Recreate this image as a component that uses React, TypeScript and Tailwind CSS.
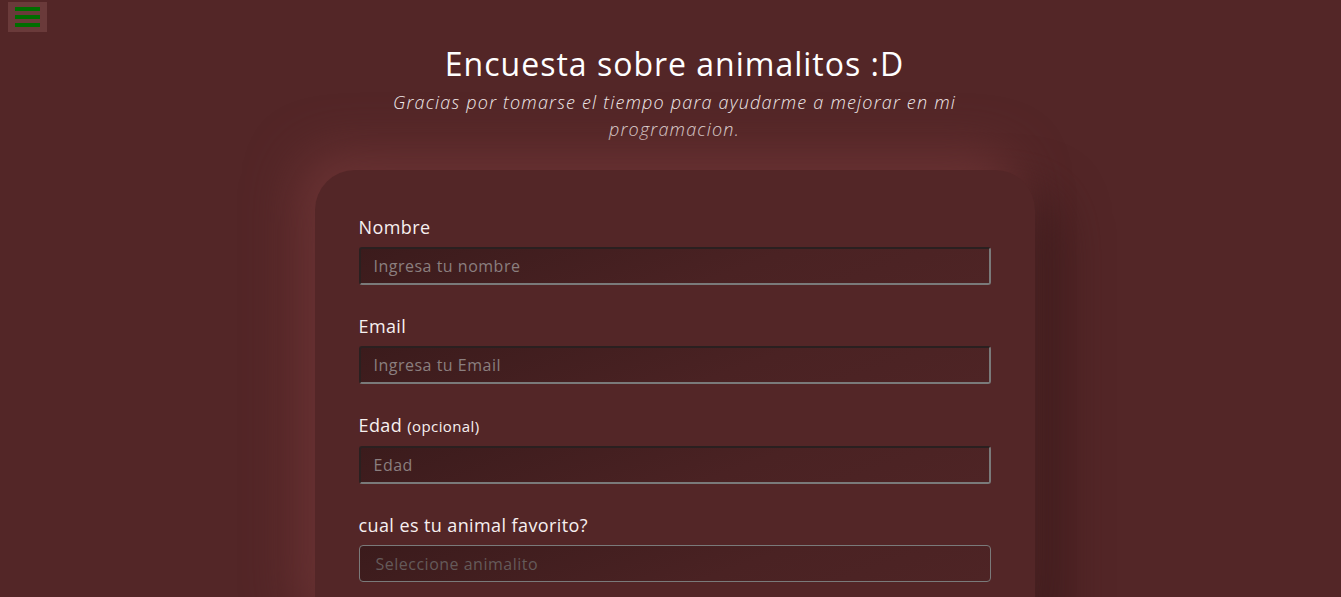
export default function App() {
  const font = { fontFamily: '"Open Sans", "Noto Sans", sans-serif' };
  const inputCls =
    'block w-full h-[38px] px-[13px] text-[16px] tracking-[0.5px] text-gray-200 placeholder:text-[#8b7f7f] bg-[linear-gradient(160deg,#3b1b1c_0%,#4a2223_60%,#4e2425_100%)] border-2 border-t-[#2a2020] border-l-[#2a2020] border-r-[#7a7a7a] border-b-[#7a7a7a] rounded-[3px] outline-none';
  const labelCls = 'block text-[18px] leading-[27px] font-medium tracking-[0.4px] mb-2 translate-y-[2px] text-[#f7f0f0]';

  return (
    <div className="min-h-[597px] bg-[#532627] text-white overflow-hidden" style={font}>
      <div className="px-2 pt-[2px]">
        <button className="flex flex-col justify-center items-center gap-[4px] w-[39px] h-[30px] bg-[#6a3a3a]">
          <span className="block w-[25px] h-[4px] bg-[#006d00]" />
          <span className="block w-[25px] h-[4px] bg-[#006d00]" />
          <span className="block w-[25px] h-[4px] bg-[#006d00]" />
        </button>
      </div>

      <div className="pl-[8px]">
        <header className="flex flex-col items-center mt-[13px]">
          <h1 className="text-[32px] leading-[38px] font-normal tracking-[1px]">Encuesta sobre animalitos :D</h1>
          <p className="mt-[6px] max-w-[600px] text-center italic text-[18px] leading-[27px] font-light tracking-[1.2px] text-[#f2ecec]">
            Gracias por tomarse el tiempo para ayudarme a mejorar en mi programacion.
          </p>
        </header>

        <div className="flex justify-center mt-[27px]">
          <form className="w-[720px] px-[44px] pt-[42px] pb-10 bg-[#532627] rounded-[40px] shadow-[-18px_-18px_50px_#6b3334,22px_22px_50px_#3a1a1b]">
            <div className="mb-[26px]">
              <label className={labelCls}>Nombre</label>
              <input className={inputCls} placeholder="Ingresa tu nombre" />
            </div>
            <div className="mb-[26px]">
              <label className={labelCls}>Email</label>
              <input className={inputCls} placeholder="Ingresa tu Email" />
            </div>
            <div className="mb-[26px]">
              <label className={labelCls}>
                Edad <span className="text-[15px]">(opcional)</span>
              </label>
              <input className={inputCls} placeholder="Edad" />
            </div>
            <div className="mb-[26px]">
              <label className={labelCls}>cual es tu animal favorito?</label>
              <div className="flex items-center w-full h-[37px] px-4 text-[16px] tracking-[0.5px] text-[#655a5a] bg-[linear-gradient(160deg,#3b1b1c_0%,#4a2223_60%,#4e2425_100%)] border border-[#7a7a7a] rounded-[4px]">
                Seleccione animalito
              </div>
            </div>
          </form>
        </div>
      </div>
    </div>
  );
}
